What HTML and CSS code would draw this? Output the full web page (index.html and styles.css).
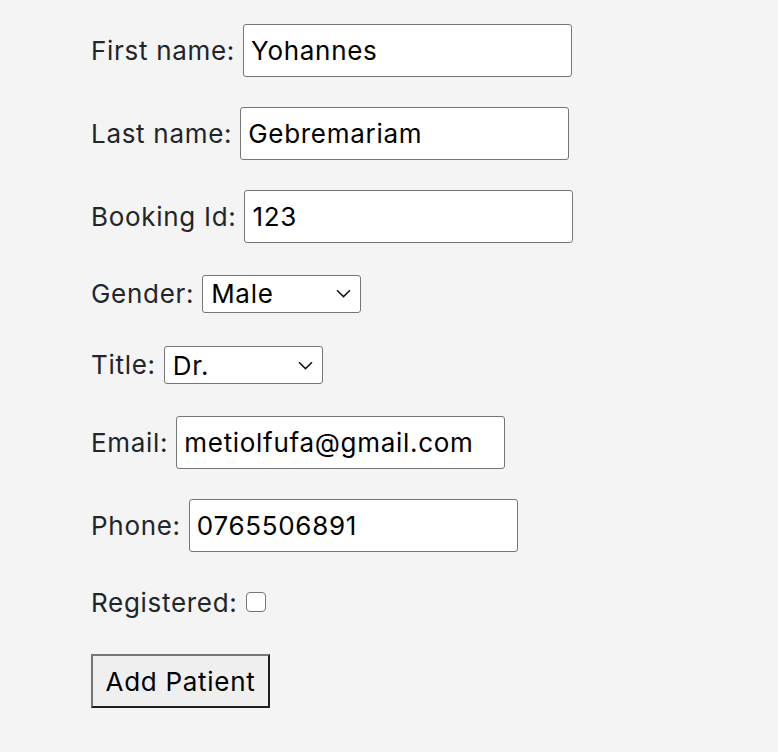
FILE: index.html
```html
<!DOCTYPE html>
<html lang="en">
<head>
<meta charset="utf-8">
<title>Add Patient</title>
<link rel="stylesheet" href="styles.css">
</head>
<body>
<form class="patient-form">
  <div class="row row-input">
    <label class="lbl" for="fn">First name:</label>
    <input class="txt" id="fn" type="text" value="Yohannes">
  </div>
  <div class="row row-input">
    <label class="lbl" for="ln">Last name:</label>
    <input class="txt" id="ln" type="text" value="Gebremariam">
  </div>
  <div class="row row-input">
    <label class="lbl" for="bid">Booking Id:</label>
    <input class="txt" id="bid" type="text" value="123">
  </div>
  <div class="row row-select">
    <label class="lbl" for="gender">Gender:</label>
    <span class="sel">
      <span class="sel-value">Male</span>
      <svg class="chev" width="15" height="9" viewBox="0 0 15 9"><path d="M1 1.2 L7.5 7.6 L14 1.2" fill="none" stroke="#111" stroke-width="1.5"/></svg>
    </span>
  </div>
  <div class="row row-select row-select2">
    <label class="lbl" for="title">Title:</label>
    <span class="sel sel-tall">
      <span class="sel-value">Dr.</span>
      <svg class="chev" width="15" height="9" viewBox="0 0 15 9"><path d="M1 1.2 L7.5 7.6 L14 1.2" fill="none" stroke="#111" stroke-width="1.5"/></svg>
    </span>
  </div>
  <div class="row row-input">
    <label class="lbl" for="em">Email:</label>
    <input class="txt" id="em" type="text" value="metiolfufa@gmail.com">
  </div>
  <div class="row row-input">
    <label class="lbl" for="ph">Phone:</label>
    <input class="txt" id="ph" type="text" value="0765506891">
  </div>
  <div class="row row-check">
    <label class="lbl" for="reg">Registered:</label>
    <input class="chk" id="reg" type="checkbox">
  </div>
  <div class="row-btn">
    <button class="btn" type="button">Add Patient</button>
  </div>
</form>
</body>
</html>
```

FILE: styles.css
```css
html, body {
  margin: 0;
  padding: 0;
  background: #f4f4f4;
}

body {
  font-family: Inter, "Liberation Sans", sans-serif;
  color: #222529;
}

.patient-form {
  display: flex;
  flex-direction: column;
  gap: 30px;
  padding: 24px 0 0 91px;
}

.row {
  display: flex;
  align-items: center;
  gap: 8px;
}

.row-input { height: 53px; }
.row-select { height: 41px; }
.row-select2 { height: 42px; }
.row-check { height: 42px; }

.lbl {
  font-size: 26px;
  letter-spacing: 0.7px;
  line-height: 30px;
  color: #222529;
}

.txt {
  box-sizing: border-box;
  width: 329px;
  height: 53px;
  margin: 0;
  padding: 0 7px;
  border: 1px solid #767676;
  border-radius: 3px;
  background: #fff;
  font-family: Inter, "Liberation Sans", sans-serif;
  font-size: 26px;
  letter-spacing: 0.7px;
  color: #000;
  outline: none;
}

.sel {
  box-sizing: border-box;
  width: 159px;
  height: 38px;
  display: flex;
  align-items: center;
  justify-content: space-between;
  padding: 0 9px 0 8px;
  border: 1px solid #767676;
  border-radius: 3px;
  background: #fff;
  font-size: 26px;
  letter-spacing: 0.7px;
  color: #000;
}

.sel-tall { height: 38px; }

.chev { display: block; }

.chk {
  appearance: none;
  -webkit-appearance: none;
  box-sizing: border-box;
  width: 20px;
  height: 20px;
  margin: 0 0 2px;
  border: 1px solid #767676;
  border-radius: 4px;
  background: #fff;
}

.btn {
  box-sizing: border-box;
  width: 179px;
  height: 54px;
  margin: 0;
  padding: 0;
  border-style: solid;
  border-width: 2px;
  border-color: #767676 #1e1e1e #1e1e1e #767676;
  background: #efefef;
  font-family: Inter, "Liberation Sans", sans-serif;
  font-size: 26px;
  letter-spacing: 0.7px;
  color: #000;
}
```
